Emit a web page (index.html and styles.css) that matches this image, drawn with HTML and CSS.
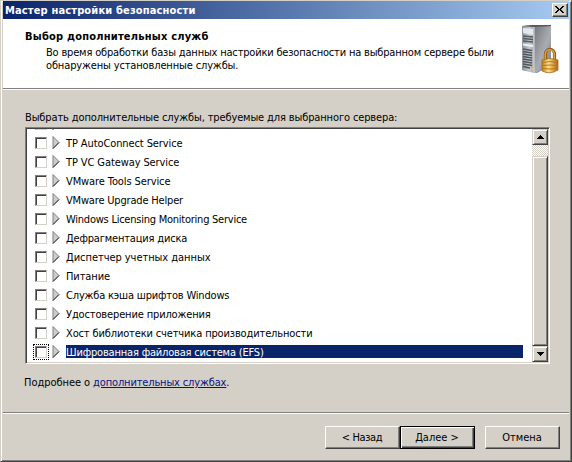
FILE: index.html
```html
<!DOCTYPE html>
<html lang="ru">
<head>
<meta charset="utf-8">
<title>Мастер настройки безопасности</title>
<link rel="stylesheet" href="styles.css">
</head>
<body>
<div class="window">
  <div class="titlebar">
    <span class="caption">Мастер настройки безопасности</span>
    <button class="close" aria-label="Закрыть"><svg width="9" height="7" viewBox="0 0 9 7" shape-rendering="crispEdges"><path d="M0 0h2v1h1v1h1v1h1V2h1V1h1V0h2v1H8v1H7v1H6v1h1v1h1v1h1v1H7V6H6V5H5V4H4v1H3v1H2v1H0V6h1V5h1V4h1V3H2V2H1V1H0z"/></svg></button>
  </div>
  <header class="header">
    <div class="intro">
      <h1>Выбор дополнительных служб</h1>
      <p><span class="t20">Во время обработки базы данных настройки безопасности на выбранном сервере были</span><br>обнаружены установленные службы.</p>
    </div>
    <svg class="server" width="40" height="50" viewBox="0 0 40 50">
      <defs>
        <linearGradient id="side" x1="0" y1="0" x2="1" y2="1"><stop offset="0" stop-color="#74777c"/><stop offset=".55" stop-color="#a9acb0"/><stop offset="1" stop-color="#777b80"/></linearGradient>
        <linearGradient id="front" x1="0" y1="0" x2="1" y2="0"><stop offset="0" stop-color="#8d9298"/><stop offset=".6" stop-color="#c6cad0"/><stop offset="1" stop-color="#a4a9af"/></linearGradient>
        <linearGradient id="brass" x1="0" y1="0" x2="1" y2="0"><stop offset="0" stop-color="#bd7d20"/><stop offset=".4" stop-color="#ffe08a"/><stop offset="1" stop-color="#a8660f"/></linearGradient>
        <symbol id="arrow" viewBox="0 0 8 13"><path d="M1 .5L7 6.500L1 12.500z" fill="#ccc" stroke="#808080"/><path d="M1 12.500L7 6.500" stroke="#303030" fill="none"/></symbol>
      </defs>
      <path d="M1 2L12 1H30V41L16 49L1 46z" fill="#85898e"/>
      <path d="M1 2L13 3V49L1 46z" fill="url(#front)"/>
      <path d="M13 3L30 2V41L16 48L13 49z" fill="url(#side)"/>
      <path d="M1 2L12 1H30V2L13 3z" fill="#55585d"/>
      <path d="M2 4L12 5V11L2 9z" fill="#e4e9ee"/>
      <path d="M2 12l10 1M2 14.500l10 1M2 17l10 1" stroke="#555b63" stroke-width="1.300"/>
      <path d="M2 19.500l10 1.500v2L2 21.500z" fill="#edf2f6"/>
      <path d="M2 25l9 1.500M2 27.500l9 1.500M2 30l9 1.500M2 32.500l9 1.500M2 35l9 1.500M2 37.500l9 1.500M2 40l9 1.500M2 42.500l7 1.500" stroke="#52575f" stroke-width="1.300"/>
      <path d="M13 3V49" stroke="#d9dde1"/>
      <path d="M11 44h2v2h-2z" fill="#f0cb40"/>
      <path d="M24.500 36V30.500C24.500 23.500 33.500 23.500 33.500 30.500V36" fill="none" stroke="#8f5c17" stroke-width="3.200"/>
      <path d="M24.300 36V30.500C24.300 24 33.300 24 33.300 30.500V36" fill="none" stroke="#d8a048" stroke-width="1.500"/>
      <path d="M21 36Q29 33 37 36V46Q29 51 21 47z" fill="url(#brass)" stroke="#a96c1b" stroke-width=".8"/>
      <path d="M22 38.500q7-2 14.500 0M22 41.500q7-1 14.500 0M22 44.500q7 1 14.500 0" fill="none" stroke="#b97817"/>
    </svg>
  </header>
  <main class="content">
    <p class="prompt">Выбрать дополнительные службы, требуемые для выбранного сервера:</p>
    <div class="listbox">
      <ul class="items">
        <li><i class="check"></i><svg class="arrow"><use href="#arrow"/></svg><span></span></li>
        <li><i class="check"></i><svg class="arrow"><use href="#arrow"/></svg><span class="t10">TP AutoConnect Service</span></li>
        <li><i class="check"></i><svg class="arrow"><use href="#arrow"/></svg><span class="t10">TP VC Gateway Service</span></li>
        <li><i class="check"></i><svg class="arrow"><use href="#arrow"/></svg><span class="t10">VMware Tools Service</span></li>
        <li><i class="check"></i><svg class="arrow"><use href="#arrow"/></svg><span class="t20">VMware Upgrade Helper</span></li>
        <li><i class="check"></i><svg class="arrow"><use href="#arrow"/></svg><span class="t25">Windows Licensing Monitoring Service</span></li>
        <li><i class="check"></i><svg class="arrow"><use href="#arrow"/></svg><span class="t20">Дефрагментация диска</span></li>
        <li><i class="check"></i><svg class="arrow"><use href="#arrow"/></svg><span class="t5">Диспетчер учетных данных</span></li>
        <li><i class="check"></i><svg class="arrow"><use href="#arrow"/></svg><span class="t10">Питание</span></li>
        <li><i class="check"></i><svg class="arrow"><use href="#arrow"/></svg><span class="t20">Служба кэша шрифтов Windows</span></li>
        <li><i class="check"></i><svg class="arrow"><use href="#arrow"/></svg><span>Удостоверение приложения</span></li>
        <li><i class="check"></i><svg class="arrow"><use href="#arrow"/></svg><span>Хост библиотеки счетчика производительности</span></li>
        <li class="selected"><i class="check"></i><svg class="arrow"><use href="#arrow"/></svg><span class="t20">Шифрованная файловая система (EFS)</span></li>
      </ul>
      <div class="scrollbar">
        <div class="step"><svg width="7" height="4" viewBox="0 0 7 4" shape-rendering="crispEdges"><path d="M3 0h1v1h1v1h1v1h1v1H0V3h1V2h1V1h1z"/></svg></div>
        <div class="track"></div>
        <div class="thumb"></div>
        <div class="step"><svg width="7" height="4" viewBox="0 0 7 4" shape-rendering="crispEdges"><path d="M0 0h7v1H6v1H5v1H4v1H3V3H2V2H1V1H0z"/></svg></div>
      </div>
    </div>
    <p class="more"><span class="t5">Подробнее о</span> <a href="#">дополнительных службах</a>.</p>
  </main>
  <footer class="footer">
    <button class="btn back">&lt; Назад</button>
    <button class="btn default">Далее &gt;</button>
    <button class="btn cancel">Отмена</button>
  </footer>
</div>
</body>
</html>
```
FILE: styles.css
```css
* { box-sizing: border-box; }
body { margin: 0; }
h1, p, ul { margin: 0; padding: 0; }
.window {
  width: 572px;
  height: 462px;
  display: flex;
  flex-direction: column;
  background: #d4d0c8;
  border: 1px solid #d4d0c8;
  border-right-color: #404040;
  border-bottom-color: #404040;
  box-shadow: inset 1px 1px #fff, inset -1px -1px #808080;
  padding: 0 2px 2px;
  font: 11px/13px "DejaVu Sans Condensed", Tahoma, sans-serif;
  letter-spacing: -.14px;
  color: #000;
}
.titlebar {
  height: 18px;
  flex: none;
  display: flex;
  align-items: center;
  justify-content: space-between;
  padding: 0 1px 0 2px;
  background: linear-gradient(90deg, #0a246a, #a6caf0);
}
.caption { color: #fff; font-weight: bold; letter-spacing: .15px; }
.close {
  width: 16px;
  height: 14px;
  padding: 0 1px 1px 0;
  display: flex;
  align-items: center;
  justify-content: center;
  background: #d4d0c8;
  border: 1px solid;
  border-color: #fff #404040 #404040 #fff;
  box-shadow: inset -1px -1px #808080;
}
.header {
  height: 70px;
  flex: none;
  display: flex;
  justify-content: space-between;
  padding: 5px 8px 0 22px;
  background: #fff;
  border-bottom: 1px solid #808080;
  box-shadow: 0 1px #fff;
}
.intro { padding-top: 6px; white-space: nowrap; }
.intro h1 { font-size: 11px; line-height: 13px; letter-spacing: .21px; }
.intro p { padding: 3px 0 0 21px; }
.server { flex: none; }
.content { height: 323px; flex: none; padding: 22px 19px 0 22px; }
.prompt { height: 16px; white-space: nowrap; letter-spacing: -.13px; }
.listbox {
  height: 237px;
  display: flex;
  border: 1px solid;
  border-color: #808080 #fff #fff #808080;
  box-shadow: inset 1px 1px #404040, inset -1px -1px #d4d0c8;
  padding: 1px;
  background: #fff;
}
.items {
  flex: 1;
  display: flex;
  flex-direction: column;
  justify-content: flex-end;
  overflow: hidden;
  list-style: none;
  padding-bottom: 1px;
}
.items li {
  height: 19px;
  flex: none;
  display: flex;
  align-items: center;
  padding: 0 9px 0 6px;
}
.items span { flex: 1; height: 13px; line-height: 15px; margin-left: 6px; white-space: nowrap; }
.check {
  width: 12px;
  height: 12px;
  margin: 1px 5px 0 2px;
  border: 1px solid;
  border-color: #808080 #d4d0c8 #d4d0c8 #808080;
  box-shadow: inset 1px 1px #404040;
}
.arrow { width: 8px; height: 13px; }
.selected span { background: #0a246a; color: #fff; }
.selected .check { outline: 1px dotted #000; outline-offset: 1px; }
.scrollbar { width: 16px; flex: none; display: flex; flex-direction: column; }
.step, .thumb {
  background: #d4d0c8;
  border: 1px solid;
  border-color: #d4d0c8 #404040 #404040 #d4d0c8;
  box-shadow: inset 1px 1px #fff, inset -1px -1px #808080;
}
.step { height: 16px; flex: none; display: flex; align-items: center; justify-content: center; }
.track { height: 11px; flex: none; background: repeating-conic-gradient(#d4d0c8 0 25%, #fff 0 50%) 0 0 / 2px 2px; }
.thumb { flex: 1; }
.more { padding-top: 12px; margin-left: -1px; letter-spacing: -.15px; }
.more a { color: #0a1282; }
.footer {
  flex: 1;
  display: flex;
  padding: 13px 9px 0;
  justify-content: flex-end;
  border-top: 1px solid #808080;
  box-shadow: inset 0 1px #fff;
}
.btn {
  width: 75px;
  height: 23px;
  padding: 0 1px 1px 0;
  font: inherit;
  color: #000;
  background: #d4d0c8;
  border: 1px solid;
  border-color: #fff #404040 #404040 #fff;
  box-shadow: inset -1px -1px #808080;
}
.back { letter-spacing: -.4px; }
.default { border-color: #000; box-shadow: inset 1px 1px #fff, inset -1px -1px #404040, inset -2px -2px #808080; }
.cancel { margin-left: 10px; }
.t5 { letter-spacing: -.05px; }
.t10 { letter-spacing: -.1px; }
.t20 { letter-spacing: -.18px; }
.t25 { letter-spacing: -.24px; }
```
